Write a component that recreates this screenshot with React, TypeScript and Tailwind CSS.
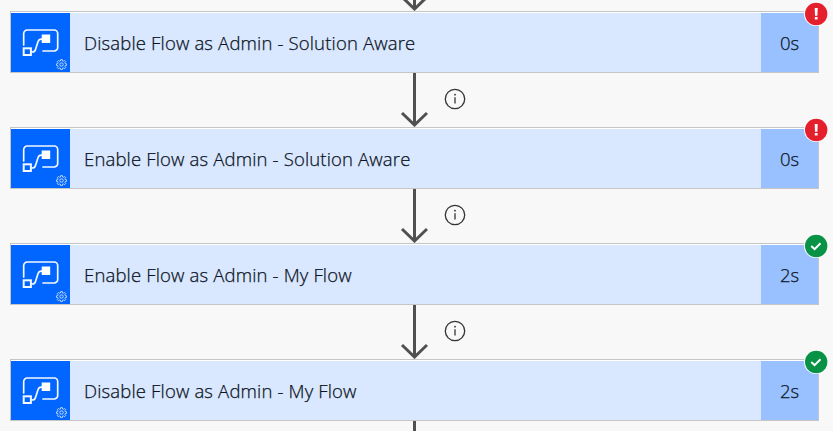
type Status = "failed" | "succeeded";

interface Step {
  title: string;
  duration: string;
  status: Status;
}

const steps: Step[] = [
  { title: "Disable Flow as Admin - Solution Aware", duration: "0s", status: "failed" },
  { title: "Enable Flow as Admin - Solution Aware", duration: "0s", status: "failed" },
  { title: "Enable Flow as Admin - My Flow", duration: "2s", status: "succeeded" },
  { title: "Disable Flow as Admin - My Flow", duration: "2s", status: "succeeded" },
];

function FlowIcon() {
  return (
    <svg width="39" height="31" viewBox="0 0 39 31" fill="none" stroke="#f4f8ff" strokeWidth="1.7">
      <path d="M2.700 18V6.500A3.500 3.500 0 0 1 6.200 3h27A3.500 3.500 0 0 1 36.700 6.500v14a3.500 3.500 0 0 1-3.500 3.500H22" strokeLinecap="round" />
      <path d="M10.500 25h.7c2 0 2.800-1 3.300-2.600l2.500-7.600c.6-1.700 1.500-2.700 3.200-2.700h1.300" />
      <rect x="2.700" y="21.300" width="7.200" height="6.700" strokeWidth="2" />
      <rect x="20.700" y="7.500" width="8.500" height="8.500" fill="#fff" stroke="none" />
    </svg>
  );
}

function GearIcon() {
  return (
    <svg className="absolute right-[3px] bottom-[2px]" width="11" height="11" viewBox="0 0 11 11" fill="none" stroke="#c4daff" strokeWidth="1">
      <circle cx="5.500" cy="5.500" r="1.700" />
      <path d="M4.700.6h1.600l.3 1.400.8.3 1.200-.8 1.100 1.100-.8 1.200.3.800 1.400.3v1.400l-1.400.3-.3.800.8 1.200-1.100 1.100-1.200-.8-.8.300-.3 1.400H4.700l-.3-1.400-.8-.3-1.200.8-1.100-1.100.8-1.200-.3-.8L.4 6.300V4.900l1.400-.3.300-.8-.8-1.200 1.100-1.100 1.200.8.800-.3z" />
    </svg>
  );
}

function StatusBadge({ status }: { status: Status }) {
  return (
    <svg className="absolute -top-[10px] -right-[10px]" width="24" height="24" viewBox="0 0 24 24">
      <circle cx="12" cy="12" r="12" fill="#fff" />
      <circle cx="12.200" cy="12" r="11.200" fill={status === "failed" ? "#e3202b" : "#079246"} />
      {status === "failed" ? (
        <path d="M10.700 6h3l-.3 7.700H11zM10.800 15.100h2.800v2.400h-2.800z" fill="#fff" />
      ) : (
        <path d="m7.300 12 3.300 3.200 5.900-5.900" fill="none" stroke="#fff" strokeWidth="2" />
      )}
    </svg>
  );
}

function Arrow() {
  return (
    <svg className="shrink-0" width="28" height="54" viewBox="0 0 28 54" fill="none" stroke="#505050">
      <path d="M14.500 0v52" strokeWidth="3" />
      <path d="m2 40 12.500 12L27 40" strokeWidth="3" />
    </svg>
  );
}

function InfoIcon() {
  return (
    <svg width="22" height="22" viewBox="0 0 22 22">
      <circle cx="11" cy="11" r="9.700" fill="none" stroke="#333" strokeWidth="1.300" />
      <path d="M11 9.200v6.300" stroke="#333" strokeWidth="1.300" />
      <circle cx="11" cy="6.700" r=".9" fill="#333" />
    </svg>
  );
}

function Connector() {
  return (
    <div className="flex h-[54px] pl-[390px]">
      <Arrow />
      <div className="pt-[14.500px] pl-[15.500px]">
        <InfoIcon />
      </div>
    </div>
  );
}

function StepCard({ step }: { step: Step }) {
  return (
    <div className="relative flex h-[62px] w-[809px] border border-[#c3c5c9] bg-white pt-px text-[#0b1322]">
      <div className="relative flex w-[59px] items-center justify-center bg-[#0066ff]">
        <FlowIcon />
        <GearIcon />
      </div>
      <div className="flex flex-1 items-center bg-[#d9e7ff] pl-[14px] tracking-[0.160px] whitespace-nowrap">{step.title}</div>
      <div className="flex w-[57px] items-center justify-center bg-[#99c1ff]">{step.duration}</div>
      <StatusBadge status={step.status} />
    </div>
  );
}

export default function App() {
  return (
    <main className="h-[431px] w-[833px] overflow-hidden bg-[#f8f8f8] pl-[10px] font-['Open_Sans','Noto_Sans',sans-serif] text-[18.500px] leading-6 font-light [-webkit-text-stroke:0.250px_#0b1322]">
      <div className="flex h-[11px] items-end overflow-hidden pl-[390px]">
        <Arrow />
      </div>
      {steps.map((step, i) => (
        <div key={step.title}>
          {i > 0 && <Connector />}
          <StepCard step={step} />
        </div>
      ))}
      <div className="ml-[403px] h-[10px] w-[3px] bg-[#505050]" />
    </main>
  );
}
